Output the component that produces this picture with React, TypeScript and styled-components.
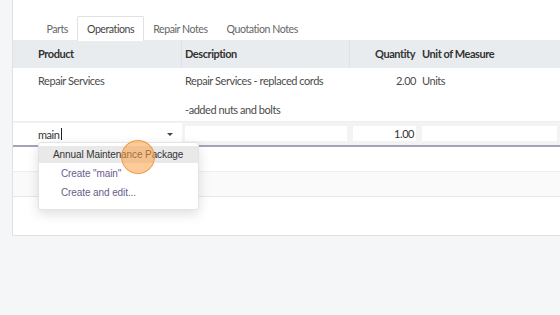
import React from 'react';
import styled, { createGlobalStyle } from 'styled-components';

const Global = createGlobalStyle`
  body {
    margin: 0;
    background: #f5f6f8;
    font-family: Lato, 'Noto Sans', sans-serif;
    letter-spacing: -0.45px;
  }
`;

const Page = styled.div`
  height: 315px;
  padding-left: 12px;
  overflow: hidden;
`;

const Card = styled.div`
  height: 236px;
  background: #fff;
  border: 1px solid #dfe1e5;
  border-top: none;
  border-right: none;
  box-sizing: border-box;
  padding-top: 16px;
`;

const Tabs = styled.div`
  display: flex;
  padding-left: 24px;
  height: 24px;
`;

const Tab = styled.div<{ active?: boolean }>`
  padding: 0 8.5px;
  font-size: 10.6px;
  line-height: 24px;
  color: ${(p) => (p.active ? '#444' : '#666')};
  background: ${(p) => (p.active ? '#fff' : 'transparent')};
  border: 1px solid ${(p) => (p.active ? '#dee2e6' : 'transparent')};
  border-bottom: none;
  border-radius: 2px 2px 0 0;
  margin-bottom: -1px;
  position: relative;
  z-index: 1;
`;

const Row = styled.div<{ bg?: string; h: number; line?: string }>`
  display: grid;
  grid-template-columns: 169px 168px 69px 1fr;
  height: ${(p) => p.h}px;
  background: ${(p) => p.bg || '#fff'};
  border-bottom: 1px solid ${(p) => p.line || 'transparent'};
  font-size: 11px;
  color: #4c4c4c;
`;

const Head = styled(Row)`
  background: #e9ecef;
  font-weight: 700;
  color: #333;
  align-items: center;
`;

const HCell = styled.div<{ right?: boolean; first?: boolean; divider?: boolean }>`
  padding-left: ${(p) => (p.first ? '25px' : '3px')};
  padding-right: 3px;
  border-right: 1px solid ${(p) => (p.divider ? '#dde0e4' : 'transparent')};
  height: 100%;
  display: flex;
  align-items: center;
  justify-content: ${(p) => (p.right ? 'flex-end' : 'flex-start')};
`;

const Cell = styled.div<{ right?: boolean; first?: boolean }>`
  padding: 5px 3px 0 ${(p) => (p.first ? '25px' : '3px')};
  text-align: ${(p) => (p.right ? 'right' : 'left')};
  line-height: 16px;
  white-space: nowrap;
`;

const Gap = styled.div`
  height: 13px;
`;

const EditRow = styled.div`
  display: grid;
  grid-template-columns: 169px 168px 69px 1fr;
  height: 23px;
  background: #f3f3f3;
  border-bottom: 2px solid #a5a3b8;
  font-size: 11px;
  color: #333;
`;

const ProductInput = styled.div`
  display: flex;
  align-items: center;
  padding-left: 25px;
  padding-right: 9px;
  background: #fff;
  margin-top: 1px;
`;

const Caret = styled.span`
  margin-left: auto;
  width: 0;
  height: 0;
  border-left: 3px solid transparent;
  border-right: 3px solid transparent;
  border-top: 3px solid #444;
`;

const Cursor = styled.span`
  display: inline-block;
  width: 1px;
  height: 12px;
  background: #222;
  margin-left: 1px;
`;

const Field = styled.div<{ right?: boolean }>`
  margin: 4px 3px 4px 3px;
  background: #fff;
  text-align: ${(p) => (p.right ? 'right' : 'left')};
  line-height: 15px;
  padding: 0 2px;
`;

const Body = styled.div`
  position: relative;
`;

const Menu = styled.div`
  position: absolute;
  left: 25px;
  top: -5px;
  width: 159px;
  padding: 3px 0 6px;
  background: #fff;
  border: 1px solid #e4e4e4;
  border-radius: 3px;
  box-shadow: 0 4px 12px rgba(0, 0, 0, 0.13);
  font-family: 'Liberation Sans', Arial, sans-serif;
  font-size: 10px;
  letter-spacing: -0.1px;
  z-index: 2;
`;

const Item = styled.div<{ active?: boolean }>`
  height: 17px;
  line-height: 17px;
  margin-bottom: 2px;
  white-space: nowrap;
  padding-left: ${(p) => (p.active ? '14px' : '22px')};
  background: ${(p) => (p.active ? '#e9e9e9' : 'transparent')};
  color: ${(p) => (p.active ? '#333' : '#6b5b8c')};
`;

const Click = styled.div`
  position: absolute;
  left: 121px;
  top: 140px;
  width: 32px;
  height: 32px;
  border-radius: 50%;
  background: rgba(251, 160, 70, 0.55);
  border: 1.5px solid rgba(240, 150, 60, 0.9);
  z-index: 3;
`;

export default function App() {
  return (
    <>
      <Global />
      <Page>
        <Card>
          <Tabs>
            <Tab>Parts</Tab>
            <Tab active>Operations</Tab>
            <Tab>Repair Notes</Tab>
            <Tab>Quotation Notes</Tab>
          </Tabs>
          <Head h={27}>
            <HCell first divider>Product</HCell>
            <HCell divider>Description</HCell>
            <HCell right>Quantity</HCell>
            <HCell>Unit of Measure</HCell>
          </Head>
          <Row h={53} line="#eee">
            <Cell first>Repair Services</Cell>
            <Cell>
              Repair Services - replaced cords
              <Gap />
              -added nuts and bolts
            </Cell>
            <Cell right>2.00</Cell>
            <Cell>Units</Cell>
          </Row>
          <EditRow>
            <ProductInput>
              main<Cursor />
              <Caret />
            </ProductInput>
            <Field />
            <Field right>1.00</Field>
            <Field />
          </EditRow>
          <Body>
            <Menu>
              <Item active>Annual Maintenance Package</Item>
              <Item>Create "main"</Item>
              <Item>Create and edit...</Item>
            </Menu>
            <Row h={24} line="#eee" />
            <Row h={24} bg="#fafafa" line="#e8e8e8" />
          </Body>
        </Card>
      </Page>
      <Click />
    </>
  );
}
